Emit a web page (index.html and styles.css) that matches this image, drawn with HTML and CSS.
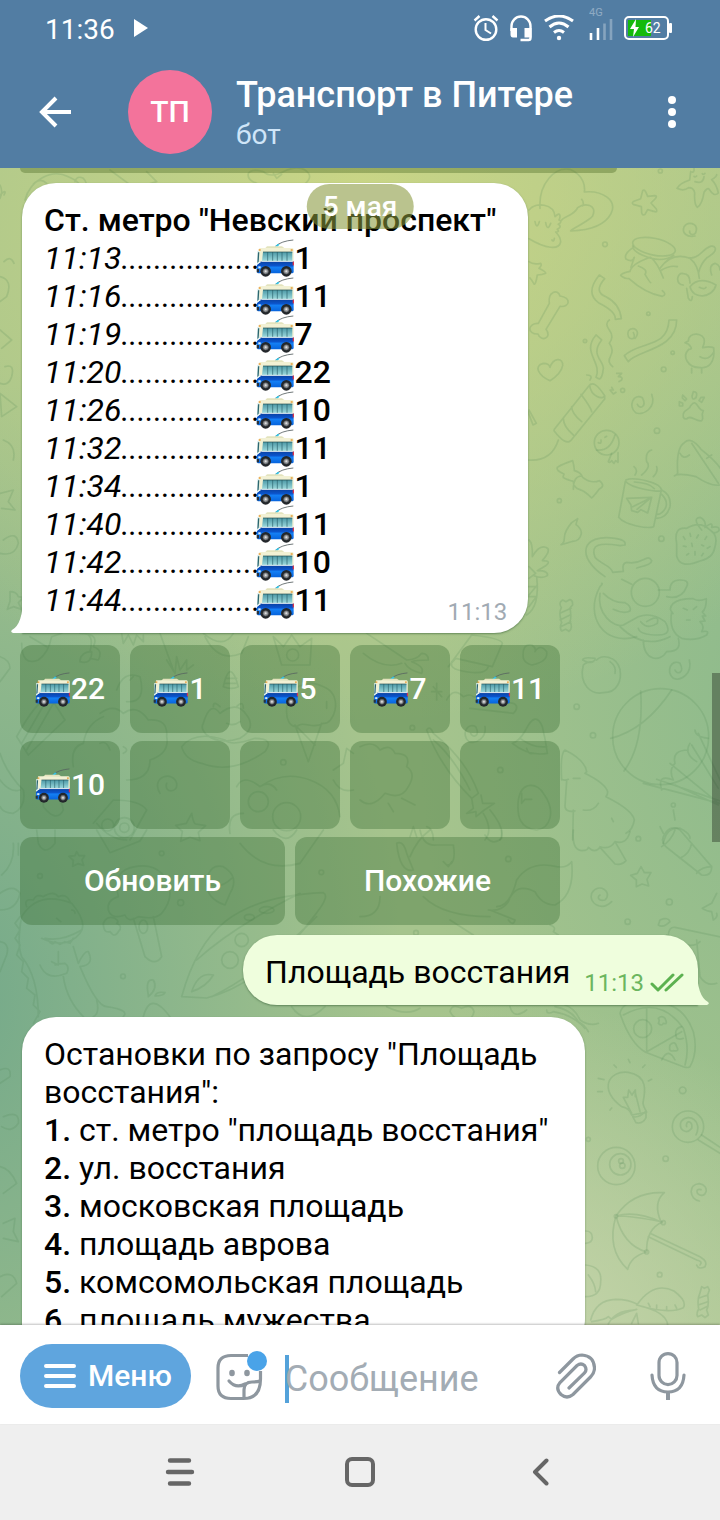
FILE: index.html
```html
<!DOCTYPE html>
<html lang="ru">
<head>
<meta charset="utf-8">
<meta name="viewport" content="width=device-width, initial-scale=1">
<title>Транспорт в Питере</title>
<link rel="stylesheet" href="styles.css">
</head>
<body>
<svg class="defs" aria-hidden="true">
  <defs>
    <linearGradient id="glass" x1="0" y1="0" x2="0" y2="1"><stop offset="0" stop-color="#4b98a6"/><stop offset="1" stop-color="#9cd9dc"/></linearGradient>
    <linearGradient id="paint" x1="0" y1="0" x2="0" y2="1"><stop offset="0" stop-color="#0a3f9e"/><stop offset=".4" stop-color="#0b56cf"/><stop offset=".5" stop-color="#1480f5"/><stop offset="1" stop-color="#0763dc"/></linearGradient>
    <symbol id="bus" viewBox="47 26 115 114">
      <path d="M104 48Q122 32 158 29" fill="none" stroke="#555f60" stroke-width="2.5"/>
      <path d="M102 49l9-8 6 1-6 7z" fill="#35c3e6"/>
      <path d="M72 55l7-7h45l8 6z" fill="#e3e3bd"/>
      <path d="M56 53h99q4 0 4 5v40H52z" fill="#f2f1d4"/>
      <path d="M50 62h5l2 33-8 8z" fill="#d9ecec"/>
      <path d="M52 66l4 0-2 28-4 4z" fill="#2b6670"/>
      <path d="M67 65h88v27H64z" fill="url(#glass)"/>
      <path d="M81 65v27M96 65v27M110 65v27M124 65v27M139 65v27" stroke="#285f69" stroke-width="2"/>
      <path d="M67 65h88" stroke="#234c50" stroke-width="2"/>
      <path d="M49 104l12-12h98v32q0 5-5 5H53q-4 0-4-5z" fill="url(#paint)"/>
      <path d="M50 101l12-8h97" fill="none" stroke="#eff6f4" stroke-width="3"/>
      <path d="M53 108h7v6h-7z" fill="#dceaf5"/>
      <path d="M156 94h4v11h-4z" fill="#d9344c"/>
      <path d="M48 116h7v10h-7z" fill="#28323d"/>
      <path d="M54 57h6v4h-6zM150 57h6v4h-6z" fill="#e69b35"/>
      <g fill="#23272b"><circle cx="75" cy="123" r="16"/><circle cx="137" cy="123" r="16"/></g>
      <g fill="#989b9e" stroke="#565a5e" stroke-width="2"><circle cx="75" cy="123" r="8"/><circle cx="137" cy="123" r="8"/></g>
      <g fill="#dedede"><circle cx="75" cy="123" r="3"/><circle cx="137" cy="123" r="3"/></g>
    </symbol>
  </defs>
</svg>
<div class="app">
  <header class="header">
    <div class="status">
      <span class="clock">11:36</span>
      <svg width="16" height="18" viewBox="0 0 16 18"><path d="M1 0l14 9L1 18z" fill="#fff"/></svg>
      <div class="status-icons">
        <svg width="26" height="28" viewBox="0 0 26 28" fill="none" stroke="#fff" stroke-width="2.4"><circle cx="13" cy="15.500" r="10.300"/><path d="M12.500 9v7l5.500 3.500" stroke-width="2"/><path d="M1.500 6.500l5-4.500M24.500 6.500l-5-4.500"/></svg>
        <svg class="headset" width="24" height="28" viewBox="0 0 24 28"><path d="M2.500 17v-5a9.500 9.500 0 0 1 19 0v12q0 2-2 2h-8" fill="none" stroke="#fff" stroke-width="2.400"/><path d="M1.500 14H8v9.500H4q-2.500 0-2.500-3zM15.500 14h7v9.500h-7z" fill="#fff"/></svg>
        <svg class="wifi" width="30" height="26" viewBox="0 0 30 26" fill="none" stroke="#fff" stroke-width="3"><path d="M1 6q14-10 28 0M5.500 12q9.500-8 19 0M10 17.500q5-4 10 0"/><circle cx="15" cy="23" r="2.200" fill="#fff" stroke="none"/></svg>
        <span class="signal"><small>4G</small>
          <svg width="24" height="21" viewBox="0 0 24 21" fill="none" stroke="#fff" stroke-width="2.600"><path d="M2 14v7M9 9v12"/><path d="M15.500 4.500V21M22 0v21" opacity=".3"/></svg>
        </span>
        <span class="battery"><i></i><svg width="10" height="18" viewBox="0 0 10 18"><path d="M6 0L0 10h4L3 18l6-10H5.500z" fill="#fff"/></svg><b>62</b></span>
      </div>
    </div>
    <div class="toolbar">
      <button class="icon-btn back" aria-label="Назад"><svg width="34" height="32" viewBox="0 0 34 32" fill="none" stroke="#fff" stroke-width="4"><path d="M33 16H4M18 2L4 16l14 14"/></svg></button>
      <div class="avatar">ТП</div>
      <div class="peer"><h1>Транспорт в Питере</h1><p>бот</p></div>
      <button class="icon-btn more" aria-label="Ещё"><svg width="8" height="32" viewBox="0 0 8 32" fill="#fff"><circle cx="4" cy="4" r="4"/><circle cx="4" cy="16" r="4"/><circle cx="4" cy="28" r="4"/></svg></button>
    </div>
  </header>

  <main class="chat">
    <svg class="doodles" viewBox="0 168 720 1157" preserveAspectRatio="xMidYMin slice" aria-hidden="true">
      <g transform="scale(.33333)">
        <path d="M0 585q22-20 12 0M0 555q10 20 0 40M75 600c15-60 80-95 130-70q40 15 40 45M100 552q20-20 40-2M225 545q5-20 25-10 20 20-10 25M330 510l75 55 65-20-30-30M745 520q10-15 45-5 20 20 60 0 40-20 65-5 30 20-5 45-30 20-65 5-30 20-75-10-30-10-25-30M820 520l10 15 15-12"/>
        <path d="M12 785q20-20 30 5M0 830q40 10 20 60l-20 15M0 990l35 30-30 25M15 1100q30-10 20 30-10 30-35 20M0 1180l50 40-45 30zM10 1320q40 15 30 60M0 1480l40-10-15 35 20 25-40-5M10 1620q40-30 45 10-10 40-55 30"/>
      </g>
      <g transform="translate(520 160) scale(.33333)">
        <path d="M60 145C55 70 105 20 150 28c45 20 45 55 43 68 55-5 100 25 80 65-20 38-65 50-120 52-10 0 55-30 65-45 15-35-25-40-45-25-10 25-45 25-50 40M188 138q5-10-3-20M27 150c20-25 75-20 78 20 20-20 15 5 12 10q12 5-2 13 12 7-3 15 8 8-5 8 15 15 15 30c-5 25-45 20-95-10M45 185q5 25 13 0M77 188q5 28 15 2M96 240q5 8 7-5"/>
        <path d="M368 92q5-5 10 5l5 12 22-2q8 1 0 10l-12 12 16 18q5 12-8 7l-18-5-8 14q-8 5-10-5l-1-18-22-6q-10-5 0-10l20-8z"/>
        <path d="M512 35q12 5 10-10M512 35l-3 25q-30 10-38 25 20 10 35-2 15 0 18 15-2 35 8 44 15-10 20-45 10-15 15-10 15 25 28 12-5-25-20-40 15-10 15-15M530 48q-5 5-8 1M555 40q-5 5-8 1M525 65q25 8 27-15"/>
        <path d="M525 228c-25 5-40-10-33-27 12-20 40-10 37 10-3 18-22 15-20 2"/>
        <ellipse cx="402" cy="260" rx="65" ry="25" transform="rotate(12 402 260)"/><path d="M338 258q0 15 30 28 55 25 93 0M340 262q-30 20-22 35 20 12 25-5l-10 30M390 292q-55 20-60 42-25 5-28 12 10 10 25 10 50 45 100 53 15-5 0-17M392 292q20 15 38 62M355 318q30 10 20 25 15 25 17 25M420 325q35-50 90-30 25 20 28 60M425 330q25-15 47-10M510 293q15 5 40-20 30-25 36-8 2 12-25 28-20 20-25 45M510 380c25-30 60-15 78-5-10 40-70 45-78 5zM538 382q15 8 20 0M500 385l5 30q10 15 12-5M490 375c-25 0-20-40 0-34q20 0 20 28M575 345q-10-30 10-35 15 5 15 20"/>
        <path d="M27 305q12 10 35 5 5 5-5 15 20 10 20 15-10 5-25 5-5 30-10 27-5-10-12-18M238 345q-45 55 0 85 50 25 48 48l18-2q-5-45-45-65-40-15-5-55zM88 430c-5-35 25-45 32-22 35 5 30 35 0 31L78 508c20 25-15 40-24 14-35 0-30-33 1-32zM268 480q-15 10 0 30 15 20 0 40 15 20 3 40-10 15 7 30M447 480h23c0 90-120 90-145 125l-12-18c45-45 130-20 134-107z"/>
        <path d="M345 535c20-20-5-40-20-22-10 30 30 30 15 5M90 662c-35-15-50-45-20-52q18 0 20 12c10-30 40-30 38-5q-5 25-38 45zM228 525l17 15c-35 45 5 60 5 85q-3 30-12 32l-10-5c20-45-45-75 0-127zM495 548l10-5c0-30 50-25 48 0 0 12-5 15-5 20q20-5 33 0c5 45-15 62-40 60-40 0-55-35-35-55 15 0 5-10 0-15zM515 625v14M545 625v14M540 590q25 15 42-15M200 645q20 0 10 15M290 640h15l-10 10q15 0 10 10l-8 5M275 682l5 8h-10l10 12 8-5"/>
        <path d="M103 808L207 677q15-20 47 30v10L152 842q-15 15-50-30zM209 677c5 35 40 40 42 33M183 703q30 40 32 52M155 740q0 20 30 45M130 775q0 25 30 50M115 840q-20 65-90 60M27 750l22 40-10 5-15-40"/>
        <path d="M395 703c15 40-25 65-48 55-25-20-5-60 20-45 15 30-10 35-15 20M490 772c-5-25 20-20 22-35 20-25 20 15 38 15-10 20 5 20-5 30-15 5-35-20-45-5q-8 0-10-5M488 705l12 12-5 5-8-8zM520 695q15 0 8 18-12 10-12-5zM543 712h10l-8 15-8-5zM478 725l10 5v8h-10z"/>
        <circle cx="260" cy="848" r="37"/><path d="M285 825q-15 50-55 45M275 880l-10 25q5 5 10-3l7 8 5-8 7 5V878M235 848q10 5 8-8M255 832l5-3"/>
        <path d="M158 902q5 20 5 30 20 5 25 20 25 20 50 10 20 15 0 25-15 20-23 27-20-20-35-25-20-5-20-25-20-5-28-10-5 0 0-12-25-10-20-20 15-10 46-20zM185 948q-25 0-25 40"/>
        <path d="M318 960c20-10 105 5 107 32-5 5-90-5-109-28L296 1072c20 25 90 35 105 28l23-110M343 966q45 2 60 20M425 990q30 15 25 50-10 35-40 35M425 1003q20 20 12 40-10 20-25 20M320 1015l75-3-12 47-20-10-10 8-18-5-2-17zM393 1013l-55 27M393 1013l-42 35M365 945q30-25 15-40 -5-30 15-35M345 945q10-15-3-25M400 950q15-15 10-30M463 948q10-5 10-10-5-75 20-90 20-20 50 20 45 35 60 60M468 945q15-5 60 5 45 30 72 25M480 880q10 20 28 5M515 850q60 90 80 120M560 895l15-10"/>
        <path d="M155 1088q15-10 18-12-5 15-5 18 20 15 15 30-5 20-25 20-15 5-35 10 10-5 10-20 0-20 22-46zM470 1150q-10-50 30-45 40-25 70 5 25 15 15 50-5 35-45 43-60 25-70-15zM545 1110q-30-35-5-38 20 10 15 30 25-20 20 0 25-5 22 10-10 10-20 5M490 1130l5 8M510 1120l2 9M535 1125l-5 9M560 1130l-5 8M490 1158l8 2M515 1150l2 9M545 1155l6 3M570 1160l-8 5M500 1185l6-4M525 1175v10M550 1180l-5 7"/>
        <path d="M27 1140q12 10 10 50 20-35 40-28 20 5-10 40 30 0 10 15l-25 15q35 0 30 15-15 10-40 0M27 1255l20-15-20-20M50 1250q10 90-30 115M25 1280h25M25 1310h25M27 1305l25-30M27 1340l22-30"/>
        <path d="M255 1250c-90-60-70-130 30-115q35 5 30 20l-15 2c-60-10-90-5-75 35 15 20 50 25 53 45l32-3q-5-25 10-27c50 10 60-30 75-5 0 15-45 20-45 22M245 1270q5 0-5 10c-50 90 15 180 110 150M305 1258q20 10 30 15"/><circle cx="376" cy="1297" r="42"/><path d="M240 1300c-10 60 40 105 70 95l45-25q40-15 80 15 25 40-20 40-55 0-60-20M250 1300q30 30 65 28 20 10 15 25-20 10-50-5M415 1290l35 0q0-30 30-30 30 0 20 20-15 40-60 30M455 1355q-10 60 30 80 40 10 75-10 10-15-15-10 10-15-5-30l15-2-8-15h10l-10-12q12-10 12-40-25 10-40 0-45 0-60 15-15 15 0 30M380 1385q40-25 32 5-30 20-50-5M370 1440c0 60 50 70 70 35 40 0 40-20 35-40M490 1345l12 5M520 1348l10-8M500 1380h10M300 1400q70 70 150 30"/>
        <path d="M128 1320l10 5 10-6q10 0 10 15l-8 10q5 30 0 40 10 20-3 30l-10-6-12 5q-8-10 0-25-10-30-1-45-10-15 4-23zM123 1358l30-13M120 1380l30-15M122 1400l30-15"/>
        <circle cx="255" cy="253" r="7"/><circle cx="421" cy="33" r="6"/><circle cx="385" cy="461" r="5"/><circle cx="195" cy="543" r="5"/><circle cx="458" cy="578" r="5"/><circle cx="431" cy="628" r="7"/><circle cx="308" cy="691" r="6"/><circle cx="411" cy="812" r="8"/><circle cx="118" cy="1022" r="6"/><circle cx="424" cy="1136" r="8"/>
      </g>
      <g transform="translate(360 580) scale(.33333)">
        <path d="M705 235q-35-5-37 5 25 15 37 0zM700 245q-20 0-30 10c-15 60 25 90 60 83 45 0 55-40 50-70-10-40-55-45-70-28M750 245q20 15 15 35M988 240c10 40-25 65-48 55-25-20-5-60 20-45 15 30-10 35-15 20"/>
        <circle cx="902" cy="470" r="144"/><path d="M842 333q10 160-50 240M935 330q-80 120-183 145M1005 450q0 20 40 25M990 490q-20 30 20 55M985 510q-50 0-40 40 -20 20-5 50-50-20-35 30M1015 460l70 150M995 495l80 130M930 550l140 115M890 598l190 65M850 610l230 60M945 615l130 60"/>
        <path d="M605 600q-5-80 10-90 60 30 65 65-5 5-5 5 60 30 68 55 0 10-5 15 80 40 85 70-5 30-25 40M605 598q10 5 20 0M620 603l-5 75q0 20 30 15M640 595l20 0M670 690q30 5 45-20M640 690l-2 90M755 715l5 10M940 690l5 30M900 740l10 20M910 790q10-50 50-45 30 15 30 30"/>
        <path d="M490 235q-5-45 25-40 15 10 10 20 15-25 35 0 5 30-45 40-20-5-25-20zM265 260l70-95q90 10 92 25l-30 70-110-25zM275 245q-5 20 20 25 80 20 90-10M10 220q60 50 115 30M20 160l120 80q30 0 45-20 20 0 20 20-40 0-50 5 40 15 30 35-40-10-50-30M230 310v50M215 335h30M220 320l25 30M260 360q20-40 50-10 20-10 30 0l120 20q20 10 0 30l-130-15M375 440c5 30-25 55-48 45-25-20-5-60 20-45 15 30-10 35-15 20"/>
        <path d="M457 490q20-5 40-40 30-60 50-10 10 40 15 80-55 10-105-30zM480 475q40 30 80 25M500 505q5 20 20 15M475 660c10-60 60-50 75-20 40 55 20 105-20 110-50-5-60-40-55-90zM485 640v30l10-12 20 0M200 450q10-15 20 10 100 80 135 180l-20 15Q240 560 200 450zM220 480q60 50 110 150M335 655l5 30-20 15 28-5v15l25-20 30-20-35 0-5-25M370 700q30 50 5 80M390 690q50 60 30 90"/>
        <path d="M0 500q40-20 60 10 30-20 45 10 50 0 35 40 30 20 5 60-20 40-70 20-40 50-75 20M85 670l15 25M125 655l40 20M150 770l10-30 10 30M200 740q20 5 20 40"/>
        <circle cx="650" cy="380" r="8"/><circle cx="699" cy="466" r="8"/><circle cx="421" cy="570" r="8"/><circle cx="940" cy="675" r="6"/><circle cx="157" cy="443" r="7"/>
      </g>
      <g transform="translate(0 580) scale(.33333)">
        <path d="M30 35q20 0 25 15l15 3-15 15 10 20-25-8-18 8 8-24zM0 230q30 10 30 35l-30 40M65 190q0 70 50 50 30-20 40-70l30-10M90 170l50 30M240 240q5-25 35-25 0 40-35 30zM270 215q10-40-5-50M240 160q60 0 40 40 30 10 15 40l-25-5M365 160l5 30 15-25 15 30 10-30 20 20v-20M480 160l40 110M500 240l25 40 5-50 10 40 20-30v30l20-15M610 160q60 50 90 0M615 170q40 80 110 50l20-50M820 170l30 30 25-35 25 35 35-25-5 80-85 0z"/><circle cx="878" cy="225" r="18"/>
        <path d="M50 470q60-110 100-120l45 70-110 105zM50 470l35 55M140 360l-75 130M160 370l-80 140M300 400q40-30 70 0 40-30 75 20 60-5 55 50 10 50-50 70 0 60-70 60M300 490q20-10 30 20M220 560q-10-60 30-70 10-60 60-80M370 500q20 10 0 20M130 680q40 50 60 10-10-60-60-30zM0 520q20 60 70 110 10 50-30 70-30 0-40-20M0 600q30 40 60 30"/>
        <path d="M545 500q40-50 130-20 20 20 90-5 60 0 30 40-100 70-190 35-50-10-60-50zM610 430q20-70 50-30 50-40 80 5 30 40-20 70-60 20-100-10-20-20-10-35zM640 380q0-20 20 0M710 380q20-20 20 5M680 430q20 10 40-5M670 320q20-90 45 0-20 10-45 0M680 295h30M675 310h35M860 400c-5-80 60-110 120-75 50 30 20 110-10 105-30 20-60-10-80 10-20 0-30-20-30-40zM885 435l40 110 40-115M885 435l60 60M925 350h20M980 365v20"/>
        <path d="M350 330q20-60 70-40 20 80-40 75M390 300l10-10M1000 570l30-20 10-45 20 15M1000 600q20 40 60 30M480 640c-30-50 40-70 50-30 5 30-40 30-30 0M280 730l60-70q80 0 100 30l-50 90M290 730q40 50 90 50"/><circle cx="323" cy="735" r="18"/><circle cx="373" cy="743" r="30"/><circle cx="373" cy="743" r="14"/>
        <path d="M575 700q5 30 12 32l30 5-22 20 5 25-30-10-28 12 5-30-20-18 32-6zM710 620q20-40 70 0 30-20 50 10M780 620q70-50 150-20 80 30 90 110M690 760q-10-60 40-60"/><circle cx="775" cy="665" r="30"/><circle cx="860" cy="710" r="42"/><circle cx="850" cy="547" r="8"/>
      </g>
      <g transform="translate(0 830) scale(.33333)">
        <path d="M230 65l7 12h17l-8 13 5 16-17-5-16 8 2-18-13-12 18-2zM290 0l40 68 90-35 20-33M110 0l5 40q20 40 50 0V0M55 40v35M40 40q5 60-35 95M0 190q40-30 60 0-10 50-60 50M0 335q30 5 20 40l-20 50"/>
        <path d="M65 260q50-80 150-40 50 60 25 90-40 50-115 15M65 260q-15 80 0 120 50 60 50 180M135 325q50 10 110-25M145 330q10 20 20 5l15 8 15-8 15 5 10-15M175 365v40l-20-10M120 405q20 50 80 25 10-20-5-30-20 0-30 5M220 350l15 50q20-40 30-35 20 40-25 45M240 410q50 120 80 120 70 10 50 30M190 440q10 70 60 120M290 510q10 40-10 50M60 260l-15 20 15 20-15 25 15 20-10 30 20 20-5 30 20 20-5 30 25 20-5 30 20 20-20 35M80 230q-10-25 20-20 10-20 30-10 30-20 45 0 25-10 35 15M215 240q10 0 10 10M170 265l12 10"/>
        <path d="M325 240q-5-30 30-40-20-80 50-90 50-10 80 20 50 60 0 120-20 20-70 10-30 20-40-5-40 15-50-15zM400 265l35 115q30 30 50 0l-25-120M310 280q10-25 35-15 15 10 5 15 20 10 5 25-10 20-25 0-20 5-20-25z"/><ellipse cx="430" cy="290" rx="13" ry="20"/><path d="M620 150q10-50 50-40 50 30 20 80l-15 35q-60-20-55-75zM620 160q40 20 75-15M445 495q-10-50 15-45 15 25-15 50zM465 498q5-15 30-10-5 10-30 10zM430 560q20-80 80 0"/>
        <path d="M545 500C600 300 700 200 970 188q20 10-20 60C840 400 720 480 620 504zM590 390Q700 290 900 190M635 500Q780 430 950 260M575 485q20-60 65-50-20 35-65 50z"/><circle cx="725" cy="330" r="20"/><circle cx="690" cy="390" r="25"/><ellipse cx="748" cy="262" rx="15" ry="9"/><ellipse cx="800" cy="240" rx="22" ry="10"/><path d="M720 40q70 90 180 60l70-100M820 0q40 50 70 0M875 530q40 60 100 0"/>
        <circle cx="485" cy="70" r="7"/><circle cx="120" cy="138" r="7"/><circle cx="542" cy="218" r="9"/><circle cx="369" cy="439" r="7"/><circle cx="964" cy="127" r="7"/>
        <path d="M0 720q35-15 30 20l-30 20M10 860q50-20 45 20-20 30-50 10M0 1010q30 5 50 50l-40 30M10 1180l35-15-5 40 15 30-45-10M0 1340q40-20 50 20l-45 40"/>
      </g>
      <g transform="translate(360 830) scale(.33333)">
        <path d="M640 0q-5 60 25 62 20 0 20-10 20 20 35 0l45 50q20 5 33-10L765 35M720 50q30 10 45-15 35 10 45-30M910 20q20-40 50-20l95 110q0 30-30 25L930 60q-30-20-20-40zM905 50q30-20 40-50M960 85q30-15 35-45M1010 130q15-20 45-20M843 110l10 18h20l-12 20 5 20-20-6-17 8v-20l-17-14 20-6zM755 215c-30 30-70 5-60-25 20-35 65-5 40 20-20 5-25-10-15-15M1070 190l-15 30-28 15q15 10 28 10l5 25q15-10 10-20"/>
        <path d="M900 270q25-10 30 5-20 20-35 10zM925 320q0-30 20-28l140 30M920 315q70 50 100 20M1010 330l10 110q20 30 50 20M570 285q20 5 10 20l15 10M410 230q40 0 60-80 40-60 120-40 30 5 45-15 10 100-50 130-40 0-60-40-60-30-80 30-20 30-60 25M110 40q20-10 30 30l20 50q-40 10-50-80zM150 80q20-50 60-80M180 0q10 50 50 45l50 0q10 60-20 60M190 200q60 60 200 60M390 240l75 30q-5 20-20 0M270 270l70 45M375 15q20 35 50 10V0M250 95l15 15 10-15M0 260q60 0 60-60"/>
        <circle cx="835" cy="26" r="7"/><circle cx="928" cy="216" r="9"/><circle cx="803" cy="275" r="8"/><circle cx="445" cy="87" r="8"/><circle cx="168" cy="308" r="7"/>
        <path d="M80 530q60 30 100 5M270 545q5-25 35-10 30-15 37 10-5 30-35 25-25 0-37-25zM450 530q10 40 50 10"/>
      </g>
      <g transform="translate(540 1000) scale(.33333)">
        <path d="M20 30q0 15 20 5 60 10 95 50M45 20q50 10 70 45 20 10 30 30M75 15q30 10 45 45 30 20 55 10M240 40q10-40 60-25 120-30 160 80 15 60-10 105-5 5-20 0L317 157Q270 130 240 40zM250 45q110-60 180 40 20 60 5 110M320 25v130l105-60"/><circle cx="308" cy="86" r="27"/><path d="M425 80q-25 5-15 35 10 5 20 0M365 180q20-40 40 0M355 55q10-10 20 0 10 20-5 15-5 10-15 0 5-10 0-15zM390 135q15-15 20 5 10 15-10 12-15 5-10-17z"/>
        <path d="M275 345q-5-20-30-25c-70-50-40-110 20-103 60 10 50 60 45 85-5 15 10 30 10 35zM278 350q20 5 40-17v20q-10 20-30 15zM275 340l-25-48 13 0 3-22 10 15 10-15v20M285 275l15 60M265 178l5 10M222 195l7 7M315 195l-7 7M175 235l17 4M335 238l-10 5M173 275h14M210 330l5-6"/>
        <circle cx="428" cy="271" r="10"/><circle cx="145" cy="418" r="6"/><circle cx="377" cy="476" r="8"/><circle cx="359" cy="824" r="7"/><circle cx="444" cy="380" r="47"/><path d="M440 380c-5-20 20-20 15 5-15 20-40 5-32-20 25-30 65 0 45 40M485 405l60 40M475 420l65 40M478 603c-30-5-35-50 0-52 35 5 20 50-5 30-5-10 0-15 10-12"/>
        <circle cx="229" cy="498" r="56"/><circle cx="241" cy="493" r="32"/><circle cx="243" cy="483" r="7"/><circle cx="247" cy="497" r="8"/>
        <path d="M228 648q50-75 145-70-35 30-10 88-75-35-135-18zM228 648q50 0 140 18-50 20-48 90-70-20-92-108zM228 648q-30 100 35 160 10-40 58-52M330 700l150 70q25 15 15 30-20 10-25-5M325 710l145 70q20 5 10 15"/><circle cx="228" cy="649" r="5"/><circle cx="370" cy="668" r="6"/><circle cx="320" cy="756" r="6"/>
        <path d="M137 795q50 5 45 50 0 45-45 45M145 825q20 25 22 50M137 693q20 0 20 20 0 15-20 17M152 960q15-60 75-62 40 0 65 15 50-70 110-40 40 30 28 50-40 20-130-5M155 965q40-5 50-15l10 8q30-20 75-30M205 972q20-40 75-42M290 915q90 20 93 60M275 970l15-30 5 30M325 910l5 10M350 915v10M380 920v10M405 915l5 10M485 860l8 5 10-5 5 10-5 15q5 30-3 45l5 15-10 8-10-8-12 5q-5-10 3-23-5-30 3-45zM475 895l28-10M475 915l28-10M480 930l24-12"/>
      </g>
    </svg>

    <div class="previous-keyboard"></div>

    <article class="bubble incoming">
      <div class="text">
        <p><b>Ст. метро "Невский проспект"</b></p>
        <ul class="times">
          <li><i>11:13.................</i><svg class="bus"><use href="#bus"/></svg><b>1</b></li>
          <li><i>11:16.................</i><svg class="bus"><use href="#bus"/></svg><b>11</b></li>
          <li><i>11:19.................</i><svg class="bus"><use href="#bus"/></svg><b>7</b></li>
          <li><i>11:20.................</i><svg class="bus"><use href="#bus"/></svg><b>22</b></li>
          <li><i>11:26.................</i><svg class="bus"><use href="#bus"/></svg><b>10</b></li>
          <li><i>11:32.................</i><svg class="bus"><use href="#bus"/></svg><b>11</b></li>
          <li><i>11:34.................</i><svg class="bus"><use href="#bus"/></svg><b>1</b></li>
          <li><i>11:40.................</i><svg class="bus"><use href="#bus"/></svg><b>11</b></li>
          <li><i>11:42.................</i><svg class="bus"><use href="#bus"/></svg><b>10</b></li>
          <li><i>11:44.................</i><svg class="bus"><use href="#bus"/></svg><b>11</b></li>
        </ul>
      </div>
      <time>11:13</time>
      <svg class="tail" width="12" height="36" viewBox="0 0 12 36"><path d="M12 0Q12 27 1 33q-2 2 1 3h10z" fill="#fff"/></svg>
    </article>

    <div class="keyboard">
      <div class="keys five">
        <button><svg class="bus"><use href="#bus"/></svg>22</button>
        <button><svg class="bus"><use href="#bus"/></svg>1</button>
        <button><svg class="bus"><use href="#bus"/></svg>5</button>
        <button><svg class="bus"><use href="#bus"/></svg>7</button>
        <button><svg class="bus"><use href="#bus"/></svg>11</button>
        <button><svg class="bus"><use href="#bus"/></svg>10</button>
        <button aria-label="Пусто"></button>
        <button aria-label="Пусто"></button>
        <button aria-label="Пусто"></button>
        <button aria-label="Пусто"></button>
      </div>
      <div class="keys two">
        <button>Обновить</button>
        <button>Похожие</button>
      </div>
    </div>

    <article class="bubble outgoing">
      <p>Площадь восстания</p>
      <time>11:13</time>
      <svg class="checks" width="34" height="20" viewBox="0 0 34 20" fill="none" stroke="#5cb150" stroke-width="3" stroke-linecap="round" stroke-linejoin="round"><path d="M2 11l6 6L23 2M16 17L32 2"/></svg>
      <svg class="tail" width="12" height="36" viewBox="0 0 12 36"><path d="M0 0Q0 27 11 33q2 2-1 3H0z" fill="#effedd"/></svg>
    </article>

    <article class="bubble incoming results">
      <div class="text">
        <p>Остановки по запросу "Площадь восстания":</p>
        <p><b>1.</b> ст. метро "площадь восстания"</p>
        <p><b>2.</b> ул. восстания</p>
        <p><b>3.</b> московская площадь</p>
        <p><b>4.</b> площадь аврова</p>
        <p><b>5.</b> комсомольская площадь</p>
        <p><b>6.</b> площадь мужества</p>
      </div>
    </article>

    <div class="date">5 мая</div>
    <div class="scrollbar"></div>
  </main>

  <form class="composer">
    <button type="button" class="menu"><svg width="32" height="24" viewBox="0 0 32 24" stroke="#fff" stroke-width="4" stroke-linecap="round"><path d="M2 2h28M2 12h28M2 22h28"/></svg>Меню</button>
    <button type="button" class="icon-btn sticker" aria-label="Стикеры"><svg width="52" height="50" viewBox="0 0 52 50" fill="none" stroke="#8e979f" stroke-width="3.200"><path d="M44.500 20v11L28 47.500H15Q2 47.500 2 35V17Q2 4.500 15 4.500h17" stroke="none"/><path d="M44.500 20v8q0 19.500-17 19.500H15Q2 47.500 2 35V17Q2 4.500 15 4.500h17"/><path d="M28 47v-8q0-8 8-8 6 0 8-1"/><path d="M13 30q7 8 16 3" stroke-linecap="round"/><ellipse cx="16" cy="22" rx="2.800" ry="3.300" fill="#8e979f" stroke="none"/><ellipse cx="31" cy="22" rx="2.800" ry="3.300" fill="#8e979f" stroke="none"/><circle cx="41" cy="10" r="10" fill="#4aa3e8" stroke="none"/></svg></button>
    <label class="field"><span class="caret"></span><input type="text" placeholder="Сообщение" aria-label="Сообщение"></label>
    <button type="button" class="icon-btn clip" aria-label="Прикрепить"><svg width="40" height="46" viewBox="0 0 40 46" fill="none" stroke="#8e979f" stroke-width="3.200" stroke-linecap="round"><path d="M3.500 19.500L17 6Q21 2 26 2q12 1 12.500 13 0 5-4 9L17 41.500q-6 5-12 0-6-6-1-12L21 12.500q4-3 7.500 0 3 4 0 7.500L13 35"/></svg></button>
    <button type="button" class="icon-btn mic" aria-label="Голосовое сообщение"><svg width="36" height="48" viewBox="0 0 36 48" fill="none" stroke="#8e979f" stroke-width="3.200"><rect x="9" y="1.600" width="18" height="31" rx="9"/><path d="M2 23q1 17 16 17t16-17" stroke-linecap="round"/><path d="M18 40v8" stroke-width="4"/></svg></button>
  </form>

  <nav class="system-nav">
    <button class="icon-btn" aria-label="Недавние"><svg width="30" height="28" viewBox="0 0 30 28" stroke="#666" stroke-width="4.400" stroke-linecap="round"><path d="M5 2.500h19M3 14h24M5 25.500h19"/></svg></button>
    <button class="icon-btn" aria-label="Домой"><svg width="30" height="30" viewBox="0 0 30 30"><rect x="2" y="2" width="26" height="26" rx="5" fill="none" stroke="#666" stroke-width="4"/></svg></button>
    <button class="icon-btn" aria-label="Назад"><svg width="17" height="28" viewBox="0 0 17 28"><path d="M14.500 2.500L3 14l11.500 11.500" fill="none" stroke="#666" stroke-width="4" stroke-linecap="round" stroke-linejoin="round"/></svg></button>
  </nav>
</div>
</body>
</html>
```

FILE: styles.css
```css
* { box-sizing: border-box; }
body, h1, p, ul { margin: 0; padding: 0; }
body { font-family: Roboto, "Liberation Sans", sans-serif; font-size: 32px; line-height: 38px; color: #000; }
button, input { font: inherit; color: inherit; border: 0; background: none; padding: 0; margin: 0; }
svg { display: block; flex: none; }
b { font-weight: 500; }
.defs { position: absolute; width: 0; height: 0; }

.app { display: flex; flex-direction: column; height: 100vh; min-height: 480px; }

.header { background: #527da3; color: #fff; flex: none; }
.status { display: flex; align-items: center; height: 56px; padding: 0 51px 0 45px; gap: 18px; }
.clock { font-size: 28px; line-height: 32px; padding-top: 3px; }
.status-icons { display: flex; align-items: center; margin-left: auto; gap: 10px; }
.wifi { margin-left: 1px; }
.signal { display: flex; flex-direction: column; gap: 2px; margin: -8px 0 0 5px; }
.signal small { font-size: 11px; line-height: 8px; opacity: .35; }
.battery { position: relative; display: flex; align-items: center; gap: 5px; width: 45px; height: 24px; padding: 0 5px 0 4px; border: 2px solid #fff; border-radius: 5px; margin-left: 1px; }
.battery i { position: absolute; left: 2px; top: 2px; bottom: 2px; width: 23px; background: #14ba0c; }
.battery svg { position: relative; }
.battery b { position: relative; font-size: 14px; line-height: 20px; font-weight: 400; }
.battery::after { content: ""; position: absolute; right: -5px; top: 5px; width: 3px; height: 10px; border-radius: 1px; background: #fff; }

.toolbar { display: flex; align-items: center; height: 112px; padding: 0 44px 0 38px; }
.icon-btn { display: flex; align-items: center; justify-content: center; flex: none; }
.avatar { display: flex; align-items: center; justify-content: center; width: 84px; height: 84px; margin: 0 24px 0 56px; border-radius: 50%; background: #f3739b; font-size: 30px; font-weight: 500; flex: none; }
.peer { flex: 1; min-width: 0; padding-top: 2px; }
.peer h1 { font-size: 36px; line-height: 44px; font-weight: 500; white-space: nowrap; overflow: hidden; text-overflow: ellipsis; }
.peer p { font-size: 28px; line-height: 36px; color: #cfe5f8; }

.chat {
  position: relative; flex: 1; min-height: 0; overflow: hidden;
  background:
    radial-gradient(ellipse 85% 46% at 50% 2%, #c9d586 0%, rgba(201, 213, 134, 0) 100%),
    radial-gradient(ellipse 62% 56% at -6% 72%, #74a98a 0%, rgba(116, 169, 138, 0) 100%),
    radial-gradient(ellipse 50% 32% at 72% 104%, #c8d6ae 0%, rgba(200, 214, 174, 0) 100%),
    radial-gradient(ellipse 50% 56% at 108% 46%, #8dba8c 0%, rgba(141, 186, 140, 0) 100%),
    #a6c48d;
  isolation: isolate;
}
.doodles { position: absolute; inset: 0; width: 100%; height: 100%; z-index: -1; fill: none; stroke: #4d8451; stroke-opacity: .18; stroke-width: 5; stroke-linecap: round; stroke-linejoin: round; }

.previous-keyboard { width: 597px; max-width: 90%; height: 5px; margin: 0 0 10px 20px; border-radius: 0 0 10px 10px; background: rgba(70, 100, 30, .36); }

.bubble { position: relative; display: grid; border-radius: 34px; box-shadow: 0 1px 2px rgba(50, 90, 50, .55); }
.bubble > .text, .bubble > time { grid-area: 1 / 1; }
.incoming { width: fit-content; max-width: 563px; margin-left: 22px; padding: 18px 21px 14px 22px; border-bottom-left-radius: 0; background: #fff; }
.incoming > .text { padding-right: 11px; }
.incoming .tail { position: absolute; left: -11px; bottom: 0; }
.times { list-style: none; }
.times .bus { display: inline-block; width: 39px; height: 38px; margin-left: -5px; vertical-align: top; }
time { font-size: 24px; line-height: 28px; color: #a1aab3; }
.incoming time { align-self: end; justify-self: end; margin-bottom: -7px; }

.keyboard { display: grid; gap: 8px; width: 75%; margin: 12px 0 10px 20px; }
.keys { display: grid; gap: 8px 10px; }
.five { grid-template-columns: repeat(5, 1fr); }
.two { grid-template-columns: repeat(2, 1fr); }
.keys button { display: flex; align-items: center; justify-content: center; height: 88px; border-radius: 12px; background: rgba(50, 102, 44, .34); color: #fff; font-size: 30px; font-weight: 500; }
.keys .bus { width: 36px; height: 35px; }

.outgoing { display: flex; align-items: center; width: fit-content; height: 70px; margin: 0 22px 12px auto; padding: 4px 14px 0 22px; border-bottom-right-radius: 0; background: #effedd; }
.outgoing time { margin: 22px 6px 0 14px; color: #6cb65f; }
.outgoing .checks { margin-top: 22px; }
.outgoing .tail { position: absolute; right: -11px; bottom: 0; }
.results { margin-bottom: 12px; }

.date { position: absolute; top: 16px; left: 50%; transform: translateX(-50%); padding: 0 16px; border-radius: 23px; background: rgba(136, 152, 60, .58); color: #fff; font-size: 28px; line-height: 45px; font-weight: 500; white-space: nowrap; }
.scrollbar { position: absolute; right: 0; top: 505px; width: 8px; height: 169px; background: rgba(0, 0, 0, .31); }

.composer { position: relative; display: flex; align-items: center; flex: none; height: 99px; padding: 2px 34px 0 20px; background: #fff; box-shadow: 0 -1px 2px rgba(0, 0, 0, .25); }
.menu { display: flex; align-items: center; gap: 12px; height: 64px; padding: 0 19px 0 24px; border-radius: 32px; background: #5fa5de; color: #fff; font-size: 30px; font-weight: 500; flex: none; }
.sticker { margin-left: 25px; }
.field { display: flex; align-items: center; flex: 1; min-width: 0; margin-left: 17px; padding-top: 6px; }
.caret { width: 4px; height: 48px; margin-right: -4px; background: #54a2da; flex: none; }
.field input { width: 100%; min-width: 0; height: 56px; outline: 0; font-size: 36px; }
.field input::placeholder { color: #a3acb4; opacity: 1; }
.clip { margin-right: 54px; }

.system-nav { display: flex; align-items: center; justify-content: center; flex: none; height: 96px; background: #efefef; }
.system-nav button { width: 25%; height: 100%; }
```
